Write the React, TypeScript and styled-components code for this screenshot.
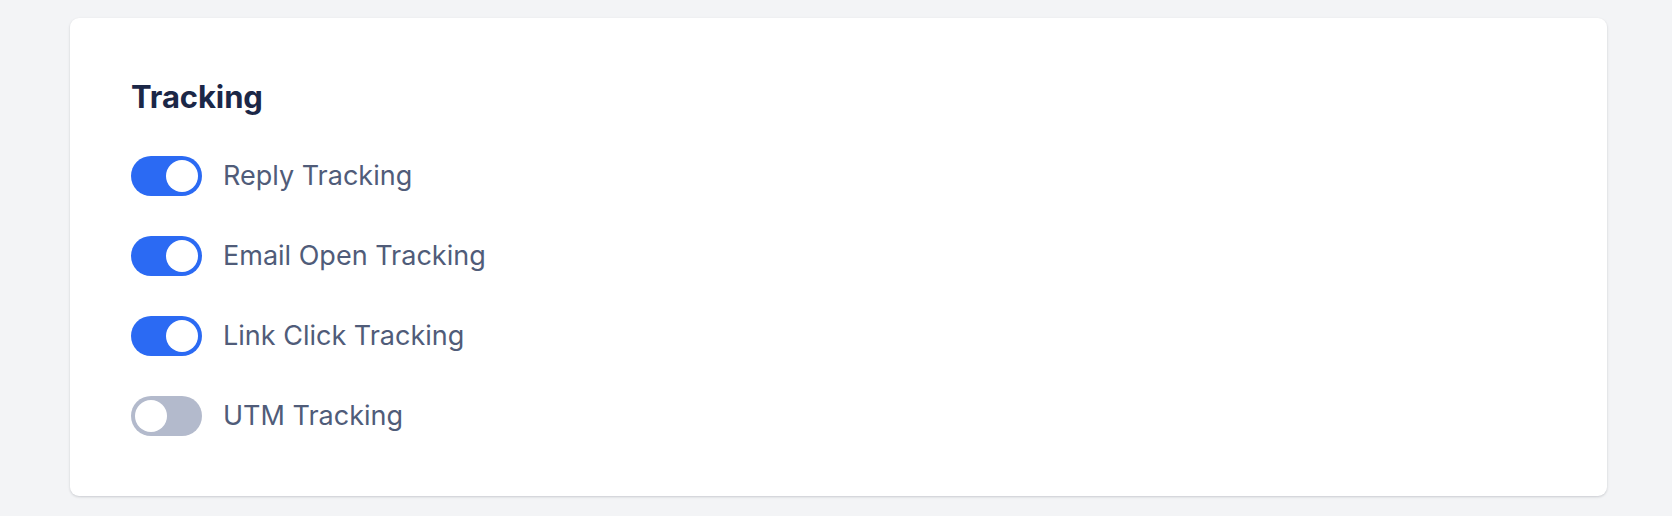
import React, { useState } from 'react';
import styled, { createGlobalStyle } from 'styled-components';

const GlobalStyle = createGlobalStyle`
  html, body {
    margin: 0;
    padding: 0;
    background: #f3f4f6;
    font-family: Inter, "Noto Sans", "Liberation Sans", sans-serif;
    -webkit-font-smoothing: antialiased;
  }
`;

const Page = styled.div`
  min-height: 100vh;
  padding: 18px 65px 20px 70px;
  box-sizing: border-box;
`;

const Card = styled.section`
  background: #ffffff;
  border-radius: 9px;
  box-shadow: 0 1px 3px rgba(16, 24, 40, 0.12), 0 1px 2px rgba(16, 24, 40, 0.06);
  padding: 60px 60px 60px 61px;
  box-sizing: border-box;
`;

const Title = styled.h2`
  margin: 0 0 41px;
  font-size: 31px;
  line-height: 37px;
  font-weight: 700;
  color: #1b2747;
  letter-spacing: -0.1px;
`;

const List = styled.div`
  display: flex;
  flex-direction: column;
  gap: 40px;
`;

const Row = styled.label`
  display: flex;
  align-items: center;
  gap: 21px;
  cursor: pointer;
`;

const Track = styled.button<{ $on: boolean }>`
  position: relative;
  width: 71px;
  height: 40px;
  flex: 0 0 auto;
  border: none;
  padding: 0;
  border-radius: 20px;
  background: ${(p) => (p.$on ? '#2b6af3' : '#b3bacc')};
  cursor: pointer;
  transition: background 0.15s ease;
`;

const Knob = styled.span<{ $on: boolean }>`
  position: absolute;
  top: 4px;
  left: ${(p) => (p.$on ? '35px' : '4px')};
  width: 32px;
  height: 32px;
  border-radius: 50%;
  background: #ffffff;
  transition: left 0.15s ease;
`;

const Label = styled.span`
  font-size: 27px;
  line-height: 40px;
  font-weight: 400;
  color: #505c79;
`;

const initial = [
  { id: 'reply', label: 'Reply Tracking', on: true },
  { id: 'open', label: 'Email Open Tracking', on: true },
  { id: 'click', label: 'Link Click Tracking', on: true },
  { id: 'utm', label: 'UTM Tracking', on: false },
];

export default function App() {
  const [items, setItems] = useState(initial);

  const toggle = (id: string) =>
    setItems((list) => list.map((it) => (it.id === id ? { ...it, on: !it.on } : it)));

  return (
    <>
      <GlobalStyle />
      <Page>
        <Card>
          <Title>Tracking</Title>
          <List>
            {items.map((it) => (
              <Row key={it.id}>
                <Track
                  type="button"
                  role="switch"
                  aria-checked={it.on}
                  $on={it.on}
                  onClick={() => toggle(it.id)}
                >
                  <Knob $on={it.on} />
                </Track>
                <Label>{it.label}</Label>
              </Row>
            ))}
          </List>
        </Card>
      </Page>
    </>
  );
}
